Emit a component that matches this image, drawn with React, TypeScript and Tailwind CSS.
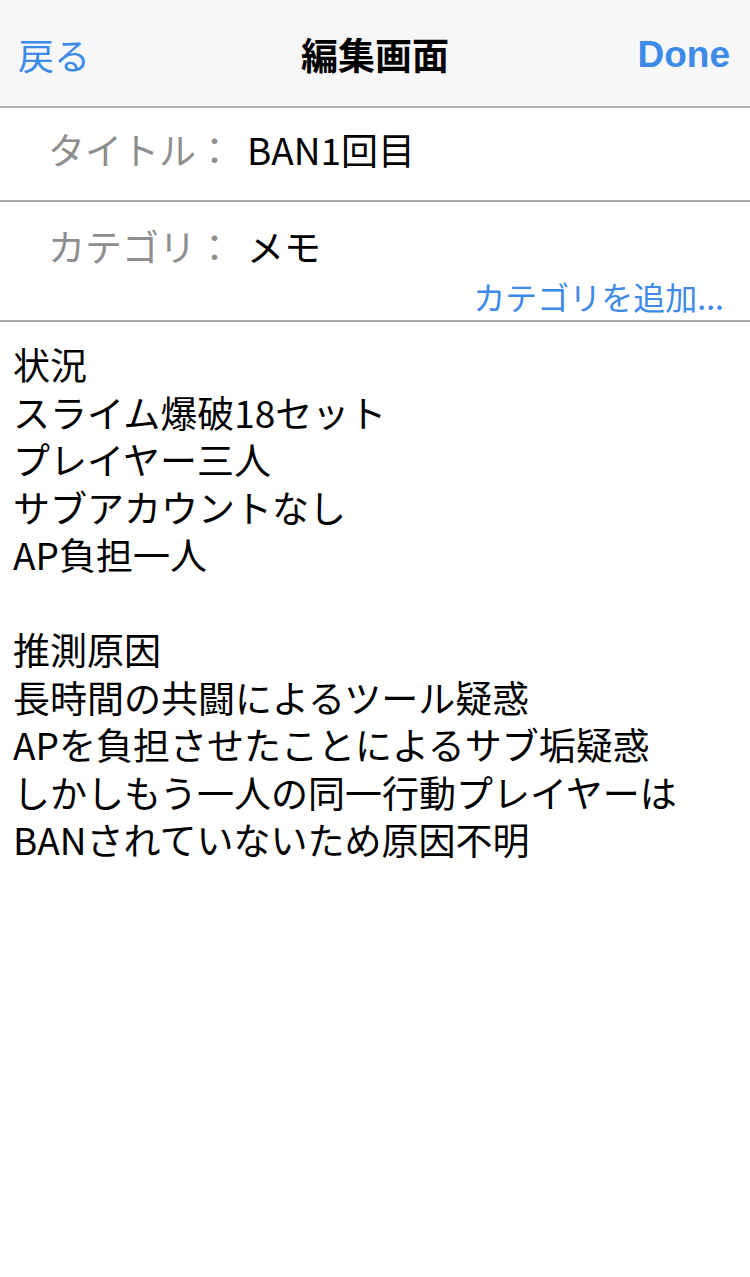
const note = `状況
スライム爆破18セット
プレイヤー三人
サブアカウントなし
AP負担一人

推測原因
長時間の共闘によるツール疑惑
APを負担させたことによるサブ垢疑惑
しかしもう一人の同一行動プレイヤーは
BANされていないため原因不明`;

export default function App() {
  return (
    <div
      className="min-h-screen bg-white text-black"
      style={{ fontFamily: '"Noto Sans CJK JP", "Noto Sans", sans-serif' }}
    >
      {/* nav bar */}
      <div className="h-[108px] bg-[#f7f7f7] border-b-2 border-[#b2b2b2] flex items-center justify-between px-[18px] pt-[2px]">
        <span className="text-[36px] leading-none text-[#3d8ae8] w-[140px]">戻る</span>
        <span className="text-[37px] leading-none font-bold">編集画面</span>
        <span
          className="text-[37px] leading-none font-bold text-[#3d8ae8] w-[140px] text-right pr-[2px]"
          style={{ fontFamily: '"Liberation Sans", Arial, sans-serif' }}
        >
          Done
        </span>
      </div>

      {/* title row */}
      <div className="h-[94px] border-b-2 border-[#aaaaaa] flex items-center pl-[48px] pb-[10px]">
        <span className="text-[37px] leading-none text-[#8e8e8e] w-[199px]">タイトル：</span>
        <span className="text-[37px] leading-none">BAN1回目</span>
      </div>

      {/* category row */}
      <div className="h-[120px] border-b-2 border-[#aaaaaa] flex flex-col">
        <div className="flex items-center pl-[48px] pt-[24px]">
          <span className="text-[37px] leading-[40px] text-[#8e8e8e] w-[199px]">カテゴリ：</span>
          <span className="text-[37px] leading-[40px]">メモ</span>
        </div>
        <div className="flex justify-end pr-[26px] mt-[12px]">
          <span className="text-[32px] leading-[36px] text-[#3d8ae8]">カテゴリを追加...</span>
        </div>
      </div>

      {/* note body */}
      <div className="px-[13px] pt-[19px] text-[37px] leading-[47.5px] whitespace-pre-line">
        {note}
      </div>
    </div>
  );
}
